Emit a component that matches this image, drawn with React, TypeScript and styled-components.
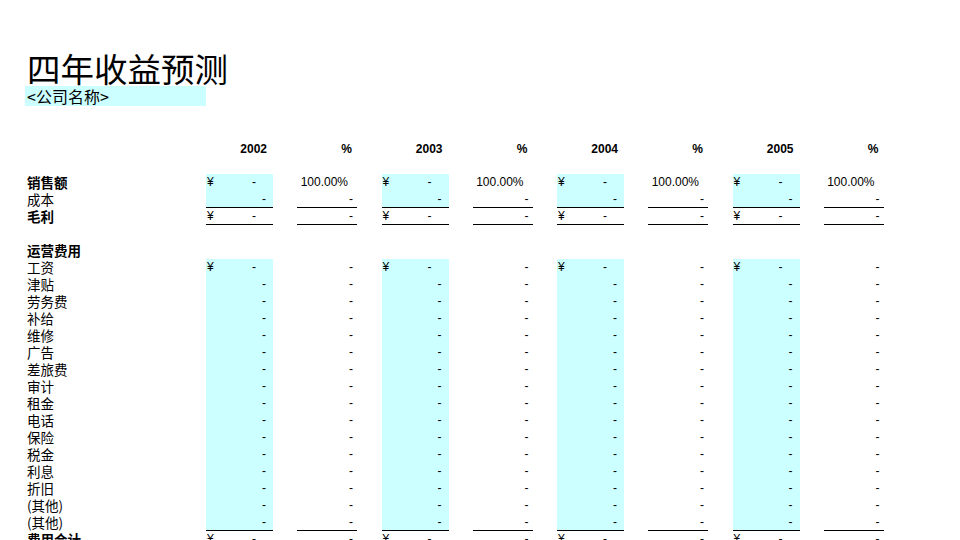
import React from "react";
import styled, { createGlobalStyle } from "styled-components";

const Global = createGlobalStyle`
  html, body { margin: 0; padding: 0; background: #ffffff; }
  body {
    font-family: "Liberation Sans", Arial, "Noto Sans CJK SC", sans-serif;
    color: #000000;
  }
`;

const CYAN = "#ccffff";
const COLS = "181px repeat(4, 67px 24px 60px 24.5px)";

const Sheet = styled.div`
  padding: 49px 0 0 25px;
`;

const Title = styled.h1`
  margin: 0;
  padding-left: 2px;
  height: 37px;
  line-height: 37px;
  font-family: "Noto Sans CJK SC", sans-serif;
  font-weight: 400;
  font-size: 33.5px;
`;

const Company = styled.div`
  width: 181px;
  height: 20px;
  line-height: 20px;
  padding-left: 2px;
  box-sizing: border-box;
  background: ${CYAN};
  font-family: "Noto Sans CJK SC", sans-serif;
  font-size: 16px;
  white-space: nowrap;
`;

const Table = styled.div`
  margin-top: 35px;
  display: flex;
  flex-direction: column;
`;

const Row = styled.div<{ $h?: number }>`
  display: grid;
  grid-template-columns: ${COLS};
  height: ${(p) => p.$h ?? 17}px;
`;

const Label = styled.div<{ $bold?: boolean }>`
  padding-left: 2px;
  display: flex;
  align-items: center;
  font-family: "Noto Sans CJK SC", sans-serif;
  font-size: 13.5px;
  line-height: 17px;
  font-weight: ${(p) => (p.$bold ? 700 : 400)};
  white-space: nowrap;
`;

const YearHead = styled.div<{ $pad: number }>`
  display: flex;
  align-items: center;
  justify-content: flex-end;
  padding-right: ${(p) => p.$pad}px;
  font-size: 12px;
  line-height: 15px;
  font-weight: 700;
`;

const ValueCell = styled.div<{ $cyan?: boolean; $line?: boolean; $pad: number }>`
  box-sizing: border-box;
  display: flex;
  align-items: center;
  justify-content: space-between;
  padding: 0 ${(p) => p.$pad}px 0 1px;
  background: ${(p) => (p.$cyan ? CYAN : "transparent")};
  border-bottom: 1px solid ${(p) => (p.$line ? "#000" : "transparent")};
  font-size: 12px;
  line-height: 14px;
`;

const PctCell = styled.div<{ $line?: boolean; $pad: number }>`
  box-sizing: border-box;
  display: flex;
  align-items: center;
  justify-content: flex-end;
  padding-right: ${(p) => p.$pad}px;
  border-bottom: 1px solid ${(p) => (p.$line ? "#000" : "transparent")};
  font-size: 12px;
  line-height: 14px;
`;

const Gap = styled.div``;

type RowDef = {
  label: string;
  bold?: boolean;
  empty?: boolean;
  cyan?: boolean;
  yen?: boolean;
  line?: boolean;
  pct?: string;
};

const expenses = [
  "工资", "津贴", "劳务费", "补给", "维修", "广告", "差旅费", "审计",
  "租金", "电话", "保险", "税金", "利息", "折旧", "(其他)", "(其他)",
];

const rows: RowDef[] = [
  { label: "销售额", bold: true, cyan: true, yen: true, pct: "100.00%" },
  { label: "成本", cyan: true, line: true, pct: "-" },
  { label: "毛利", bold: true, yen: true, line: true, pct: "-" },
  { label: "", empty: true },
  { label: "运营费用", bold: true, empty: true },
  ...expenses.map((e, i) => ({
    label: e,
    cyan: true,
    yen: i === 0,
    line: i === expenses.length - 1,
    pct: "-",
  })),
  { label: "费用合计", bold: true, yen: true, pct: "-" },
];

const years = ["2002", "2003", "2004", "2005"];

export default function App() {
  return (
    <>
      <Global />
      <Sheet>
        <Title>四年收益预测</Title>
        <Company>&lt;公司名称&gt;</Company>
        <Table>
          <Row>
            <Label />
            {years.map((y) => (
              <React.Fragment key={y}>
                <YearHead $pad={6}>{y}</YearHead>
                <Gap />
                <YearHead $pad={5}>%</YearHead>
                <Gap />
              </React.Fragment>
            ))}
          </Row>
          <Row $h={16} />
          {rows.map((r, ri) => (
            <Row key={ri}>
              <Label $bold={r.bold}>{r.label}</Label>
              {years.map((y) =>
                r.empty ? (
                  <React.Fragment key={y}>
                    <Gap />
                    <Gap />
                    <Gap />
                    <Gap />
                  </React.Fragment>
                ) : (
                  <React.Fragment key={y}>
                    <ValueCell $cyan={r.cyan} $line={r.line} $pad={r.yen ? 17 : 7}>
                      <span>{r.yen ? "¥" : ""}</span>
                      <span>-</span>
                    </ValueCell>
                    <Gap />
                    <PctCell $line={r.line} $pad={r.pct === "-" ? 4 : 9}>
                      {r.pct}
                    </PctCell>
                    <Gap />
                  </React.Fragment>
                )
              )}
            </Row>
          ))}
        </Table>
      </Sheet>
    </>
  );
}
